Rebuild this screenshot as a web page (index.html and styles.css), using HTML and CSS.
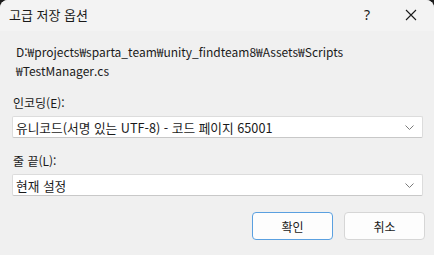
FILE: index.html
```html
<!DOCTYPE html>
<html lang="ko">
<head>
<meta charset="utf-8">
<link rel="stylesheet" href="styles.css">
</head>
<body>
<div class="window">
  <div class="titlebar">
    <span class="title">고급 저장 옵션</span>
    <span class="help">?</span>
    <span class="close">
      <svg width="12" height="12" viewBox="0 0 12 12"><path d="M1 1 L11 11 M11 1 L1 11" stroke="#1a1a1a" stroke-width="1.1" fill="none"/></svg>
    </span>
  </div>
  <div class="content">
    <p class="path">D:₩projects₩sparta_team₩unity_findteam8₩Assets₩Scripts<br>₩TestManager.cs</p>
    <div class="field">
      <div class="label">인코딩(E):</div>
      <div class="select"><span>유니코드(서명 있는 UTF-8) - 코드 페이지 65001</span>
        <svg class="chev" width="9" height="5" viewBox="0 0 9 5"><path d="M0.5 0.5 L4.5 4.5 L8.5 0.5" stroke="#7a7a7a" stroke-width="1" fill="none"/></svg>
      </div>
    </div>
    <div class="field">
      <div class="label">줄 끝(L):</div>
      <div class="select"><span>현재 설정</span>
        <svg class="chev" width="9" height="5" viewBox="0 0 9 5"><path d="M0.5 0.5 L4.5 4.5 L8.5 0.5" stroke="#7a7a7a" stroke-width="1" fill="none"/></svg>
      </div>
    </div>
    <div class="buttons">
      <button class="btn primary">확인</button>
      <button class="btn">취소</button>
    </div>
  </div>
</div>
</body>
</html>
```
FILE: styles.css
```css
html, body {
  margin: 0;
  padding: 0;
  background: #1c1c1c;
}
body {
  width: 434px;
  height: 255px;
  overflow: hidden;
  font-family: "Noto Sans", "Noto Sans CJK KR", sans-serif;
  font-size: 12px;
  color: #1a1a1a;
}
.window {
  height: 255px;
  background: #f0f0f0;
  border-radius: 8px 8px 0 0;
  overflow: hidden;
  display: flex;
  flex-direction: column;
}
.titlebar {
  height: 31px;
  background: #f3f3f3;
  display: flex;
  align-items: center;
  padding-left: 9px;
}
.title {
  flex: 1;
  font-size: 13px;
  font-family: "Noto Sans CJK KR", sans-serif;
  padding-bottom: 2px;
}
.help {
  width: 46px;
  text-align: center;
  font-size: 14px;
  padding-bottom: 2px;
  margin-right: -2px;
}
.close {
  width: 46px;
  display: flex;
  justify-content: center;
  padding-bottom: 2px;
}
.content {
  padding: 11px 11px 0 12px;
  display: flex;
  flex-direction: column;
}
.path {
  margin: 0 0 0 4px;
  line-height: 19px;
  font-family: "Noto Sans CJK KR", sans-serif;
}
.field {
  margin-top: 15px;
}
.field + .field {
  margin-top: 15px;
}
.label {
  margin-left: 1px;
  line-height: 16px;
  font-family: "Noto Sans CJK KR", sans-serif;
  margin-bottom: 5px;
}
.select {
  height: 20px;
  background: #ffffff;
  border: 1px solid #dcdcdc;
  border-bottom-color: #c8c8c8;
  border-radius: 2px;
  display: flex;
  align-items: center;
  justify-content: space-between;
  padding: 0 8px 0 3px;
  font-family: "Noto Sans CJK KR", sans-serif;
  font-size: 12.7px;
}
.chev {
  display: block;
}
.buttons {
  display: flex;
  justify-content: flex-end;
  gap: 11px;
  margin-top: 16px;
  margin-right: -2px;
}
.btn {
  width: 81px;
  height: 28px;
  background: #fdfdfd;
  border: 1px solid #d6d6d6;
  border-radius: 4px;
  font-family: "Noto Sans CJK KR", sans-serif;
  font-size: 12px;
  color: #1a1a1a;
  padding: 0;
}
.btn.primary {
  border: 1px solid #5aa0e0;
}
```
